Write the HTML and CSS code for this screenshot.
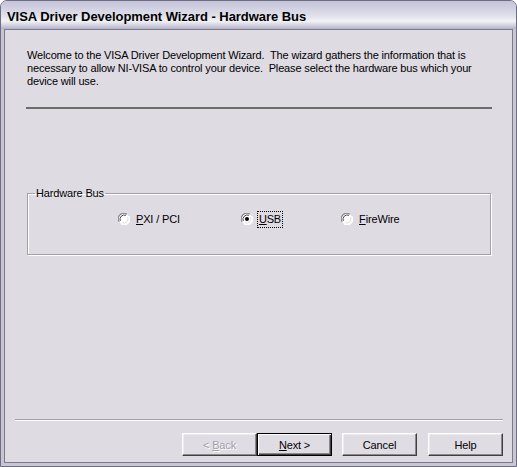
FILE: index.html
```html
<!DOCTYPE html>
<html>
<head>
<meta charset="utf-8">
<link rel="stylesheet" href="styles.css">
</head>
<body>
<div class="window">
  <div class="titlebar"><span class="title">VISA Driver Development Wizard - Hardware Bus</span></div>
  <div class="client">
    <p class="intro">Welcome to the VISA Driver Development Wizard.&nbsp; The wizard gathers the information that is<br>necessary to allow NI-VISA to control your device.&nbsp; Please select the hardware bus which your<br>device will use.</p>
    <div class="sep-top"></div>
    <fieldset class="group">
      <legend class="legend">Hardware Bus</legend>
      <div class="radios">
        <label class="radio r1">
          <svg class="rb" width="12" height="12" viewBox="0 0 12 12"><circle cx="6" cy="6" r="5.5" fill="#fff"/><path d="M1.2 8.8 A5.5 5.5 0 0 1 8.8 1.2" fill="none" stroke="#8a8790" stroke-width="1.2"/><path d="M2.3 7.9 A4.3 4.3 0 0 1 7.9 2.3" fill="none" stroke="#45434a" stroke-width="1"/><path d="M10.8 3.2 A5.5 5.5 0 0 1 3.2 10.8" fill="none" stroke="#fff" stroke-width="1.2"/><path d="M9.7 4.1 A4.3 4.3 0 0 1 4.1 9.7" fill="none" stroke="#dcd8e0" stroke-width="1"/></svg>
          <span class="lbl"><u>P</u>XI / PCI</span>
        </label>
        <label class="radio r2">
          <svg class="rb" width="12" height="12" viewBox="0 0 12 12"><circle cx="6" cy="6" r="5.5" fill="#fff"/><path d="M1.2 8.8 A5.5 5.5 0 0 1 8.8 1.2" fill="none" stroke="#8a8790" stroke-width="1.2"/><path d="M2.3 7.9 A4.3 4.3 0 0 1 7.9 2.3" fill="none" stroke="#45434a" stroke-width="1"/><path d="M10.8 3.2 A5.5 5.5 0 0 1 3.2 10.8" fill="none" stroke="#fff" stroke-width="1.2"/><path d="M9.7 4.1 A4.3 4.3 0 0 1 4.1 9.7" fill="none" stroke="#dcd8e0" stroke-width="1"/><circle cx="6" cy="6" r="2" fill="#000"/></svg>
          <span class="lbl focus"><u>U</u>SB</span>
        </label>
        <label class="radio r3">
          <svg class="rb" width="12" height="12" viewBox="0 0 12 12"><circle cx="6" cy="6" r="5.5" fill="#fff"/><path d="M1.2 8.8 A5.5 5.5 0 0 1 8.8 1.2" fill="none" stroke="#8a8790" stroke-width="1.2"/><path d="M2.3 7.9 A4.3 4.3 0 0 1 7.9 2.3" fill="none" stroke="#45434a" stroke-width="1"/><path d="M10.8 3.2 A5.5 5.5 0 0 1 3.2 10.8" fill="none" stroke="#fff" stroke-width="1.2"/><path d="M9.7 4.1 A4.3 4.3 0 0 1 4.1 9.7" fill="none" stroke="#dcd8e0" stroke-width="1"/></svg>
          <span class="lbl"><u>F</u>ireWire</span>
        </label>
      </div>
    </fieldset>
    <div class="spacer"></div>
    <div class="sep-bottom"></div>
    <div class="buttons">
      <button class="btn disabled">&lt; <u>B</u>ack</button>
      <button class="btn default"><u>N</u>ext &gt;</button>
      <button class="btn cancel">Cancel</button>
      <button class="btn help">Help</button>
    </div>
  </div>
</div>
</body>
</html>
```
FILE: styles.css
```css
* { box-sizing: border-box; }
html, body { margin: 0; padding: 0; background: #fff; }
body { font-family: "Liberation Sans", Arial, sans-serif; font-size: 11px; color: #000; letter-spacing: -0.15px; }

.window {
  width: 517px;
  height: 467px;
  display: flex;
  flex-direction: column;
  border: 1px solid #6e6d86;
  border-radius: 7px 7px 0 0;
  background: #dfdbe3;
  overflow: hidden;
}

.titlebar {
  height: 28px;
  flex: none;
  display: flex;
  align-items: center;
  padding-left: 6px;
  background: linear-gradient(to bottom, #c4c3d8 0%, #d4d3e3 30%, #e2e2ec 55%, #f2f2f7 72%, #cfcfdc 88%, #b2b2c6 100%);
}
.title {
  font-family: "Liberation Sans", Arial, sans-serif;
  font-weight: bold;
  font-size: 13px;
  letter-spacing: -0.05px;
  color: #000;
  padding-top: 2px;
}

.client {
  flex: 1;
  display: flex;
  flex-direction: column;
  border-left: 3px solid #c9c6d0;
  border-right: 3px solid #c9c6d0;
  border-bottom: 3px solid #c9c6d0;
  box-shadow: inset 1px 1px 0 #7c7a90, inset -1px -1px 0 #7c7a90;
  padding: 0 0 7px 0;
}

.intro {
  margin: 20px 0 0 23px;
  line-height: 13px;
  white-space: nowrap;
}

.sep-top {
  height: 2px;
  background: #6f6a6c;
  margin: 19px 21px 0 22px;
}

.group {
  margin: 78px 22px 0 23px;
  height: 68px;
  border: 1px solid #a3a0a8;
  box-shadow: inset 1px 1px 0 #fff, 1px 1px 0 #fff;
  padding: 0;
}
.legend {
  padding: 0 1px;
  margin-left: 7px;
  line-height: 13px;
}

.radios {
  display: flex;
  align-items: center;
  padding-top: 11px;
  padding-left: 90px;
}
.radio {
  display: flex;
  align-items: center;
  gap: 5px;
  height: 16px;
}
.r2 { margin-left: 60px; }
.r3 { margin-left: 59px; }
.rb { display: block; }
.lbl { padding: 1px 1px; line-height: 13px; }
.lbl.focus { outline: 1px dotted #000; outline-offset: 0; }

.spacer { flex: 1; }

.sep-bottom {
  height: 2px;
  border-top: 1px solid #a3a0a8;
  border-bottom: 1px solid #fff;
  margin: 0 10px 0 11px;
}

.buttons {
  display: flex;
  justify-content: flex-end;
  margin-top: 12px;
  padding-right: 10px;
}
.btn {
  width: 75px;
  height: 23px;
  font-family: "Liberation Sans", Arial, sans-serif;
  font-size: 11px;
  letter-spacing: -0.15px;
  color: #000;
  background: #e0dce4;
  border: 1px solid;
  border-color: #fff #404040 #404040 #fff;
  box-shadow: inset -1px -1px 0 #8a8790, inset 1px 1px 0 #ece9ef;
  padding: 0;
  margin: 0;
}
.btn.default {
  border: 1px solid #000;
  box-shadow: inset 1px 1px 0 #fff, inset -1px -1px 0 #404040, inset -2px -2px 0 #8a8790;
}
.btn.disabled { color: #a29fa8; text-shadow: 1px 1px 0 #fff; }
.cancel { margin-left: 10px; }
.help { margin-left: 11px; }
```
